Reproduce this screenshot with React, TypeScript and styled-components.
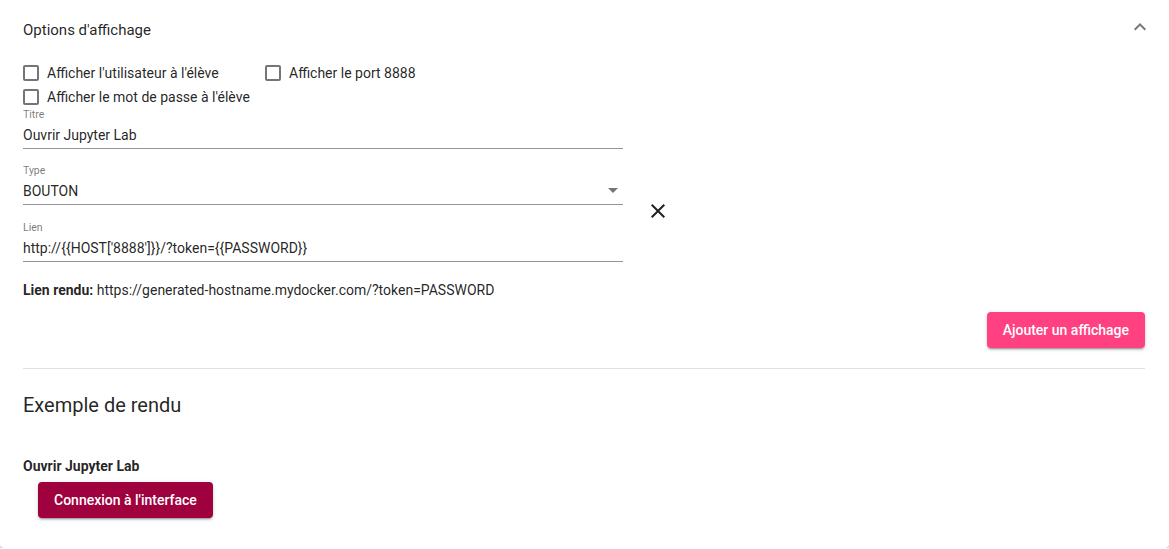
import React from "react";
import styled, { createGlobalStyle } from "styled-components";

const Global = createGlobalStyle`
  html, body { margin: 0; padding: 0; background: #fff; }
  body { font-family: Roboto, "Noto Sans", Arial, sans-serif; color: rgba(0,0,0,0.87); }
  * { box-sizing: border-box; }
`;

const Card = styled.div`
  width: 1169px;
  height: 548px;
  background: #fff;
  border-radius: 0 0 4px 4px;
  box-shadow: 0 1px 3px rgba(0,0,0,0.2), 0 1px 1px rgba(0,0,0,0.14), 0 2px 1px -1px rgba(0,0,0,0.12);
  padding: 0 24px 0 23px;
  display: flex;
  flex-direction: column;
`;

const Header = styled.div`
  height: 61px;
  display: flex;
  align-items: center;
  justify-content: space-between;
  padding-bottom: 1px;
`;

const HeaderTitle = styled.div`
  font-size: 15px;
  line-height: 20px;
  color: rgba(0,0,0,0.87);
`;

const Chevron = styled.svg`
  width: 24px;
  height: 24px;
  margin-right: -7px;
  margin-top: -6px;
  fill: rgba(0,0,0,0.54);
`;

const CheckRow = styled.div`
  display: flex;
  height: 24px;
  align-items: center;
`;

const CheckLabel = styled.label<{ $width?: number }>`
  display: flex;
  align-items: center;
  font-size: 14px;
  color: rgba(0,0,0,0.87);
  ${(p) => (p.$width ? `width: ${p.$width}px;` : "")}
`;

const Box = styled.span`
  width: 16px;
  height: 16px;
  border: 2px solid rgba(0,0,0,0.54);
  border-radius: 2px;
  margin-right: 8px;
  flex: none;
`;

const Fields = styled.div<{ $gap: number }>`
  display: flex;
  flex-direction: column;
  gap: ${(p) => p.$gap}px;
`;

const Field = styled.div`
  width: 600px;
  display: flex;
  flex-direction: column;
  border-bottom: 1px solid rgba(0,0,0,0.42);
  height: 40px;
`;

const FieldLabel = styled.div`
  font-size: 10.5px;
  line-height: 11px;
  color: rgba(0,0,0,0.54);
`;

const FieldValue = styled.div`
  flex: 1;
  display: flex;
  align-items: center;
  justify-content: space-between;
  font-size: 14px;
  padding-top: 1px;
  color: rgba(0,0,0,0.87);
`;

const Caret = styled.span`
  width: 0;
  height: 0;
  border-left: 5px solid transparent;
  border-right: 5px solid transparent;
  border-top: 5px solid rgba(0,0,0,0.54);
  margin-right: 5px;
`;

const LinkGroup = styled.div`
  display: flex;
  align-items: center;
`;

const CloseIcon = styled.svg`
  width: 24px;
  height: 24px;
  margin-left: 23px;
  margin-top: -5px;
  fill: rgba(0,0,0,0.87);
`;

const Rendered = styled.div`
  margin-top: 20px;
  font-size: 14px;
  line-height: 16px;
  color: rgba(0,0,0,0.87);
  b { font-weight: 700; }
`;

const ActionRow = styled.div`
  display: flex;
  justify-content: flex-end;
  margin-top: 14px;
`;

const Button = styled.button<{ $bg: string }>`
  height: 36px;
  padding: 0 16px;
  border: none;
  border-radius: 4px;
  background: ${(p) => p.$bg};
  color: #fff;
  font-family: Roboto, Arial, sans-serif;
  font-size: 14px;
  font-weight: 500;
  box-shadow: 0 3px 1px -2px rgba(0,0,0,0.2), 0 2px 2px 0 rgba(0,0,0,0.14), 0 1px 5px 0 rgba(0,0,0,0.12);
`;

const Divider = styled.hr`
  border: none;
  border-top: 1px solid rgba(0,0,0,0.12);
  margin: 20px 0 0;
`;

const SectionTitle = styled.div`
  margin-top: 24px;
  font-size: 20px;
  line-height: 24px;
  color: rgba(0,0,0,0.87);
`;

const PreviewTitle = styled.div`
  margin-top: 41px;
  font-size: 14px;
  font-weight: 700;
  line-height: 16px;
`;

const PreviewAction = styled.div`
  margin-top: 8px;
  padding-left: 15px;
`;

export default function App() {
  return (
    <>
      <Global />
      <Card>
        <Header>
          <HeaderTitle>Options d'affichage</HeaderTitle>
          <Chevron viewBox="0 0 24 24">
            <path d="M7.41 15.41L12 10.83l4.59 4.58L18 14l-6-6-6 6z" />
          </Chevron>
        </Header>
        <CheckRow>
          <CheckLabel $width={242}>
            <Box />
            Afficher l'utilisateur à l'élève
          </CheckLabel>
          <CheckLabel>
            <Box />
            Afficher le port 8888
          </CheckLabel>
        </CheckRow>
        <CheckRow>
          <CheckLabel>
            <Box />
            Afficher le mot de passe à l'élève
          </CheckLabel>
        </CheckRow>
        <Fields $gap={16}>
          <Field>
            <FieldLabel>Titre</FieldLabel>
            <FieldValue>Ouvrir Jupyter Lab</FieldValue>
          </Field>
          <LinkGroup>
            <Fields $gap={17}>
              <Field>
                <FieldLabel>Type</FieldLabel>
                <FieldValue>
                  BOUTON
                  <Caret />
                </FieldValue>
              </Field>
              <Field>
                <FieldLabel>Lien</FieldLabel>
                <FieldValue>http://{"{{"}HOST['8888']{"}}"}/?token={"{{"}PASSWORD{"}}"}</FieldValue>
              </Field>
            </Fields>
            <CloseIcon viewBox="0 0 24 24">
              <path d="M19 6.41L17.59 5 12 10.59 6.41 5 5 6.41 10.59 12 5 17.59 6.41 19 12 13.41 17.59 19 19 17.59 13.41 12z" />
            </CloseIcon>
          </LinkGroup>
        </Fields>
        <Rendered>
          <b>Lien rendu:</b> https://generated-hostname.mydocker.com/?token=PASSWORD
        </Rendered>
        <ActionRow>
          <Button $bg="#ff4081">Ajouter un affichage</Button>
        </ActionRow>
        <Divider />
        <SectionTitle>Exemple de rendu</SectionTitle>
        <PreviewTitle>Ouvrir Jupyter Lab</PreviewTitle>
        <PreviewAction>
          <Button $bg="#9f003e">Connexion à l'interface</Button>
        </PreviewAction>
      </Card>
    </>
  );
}
